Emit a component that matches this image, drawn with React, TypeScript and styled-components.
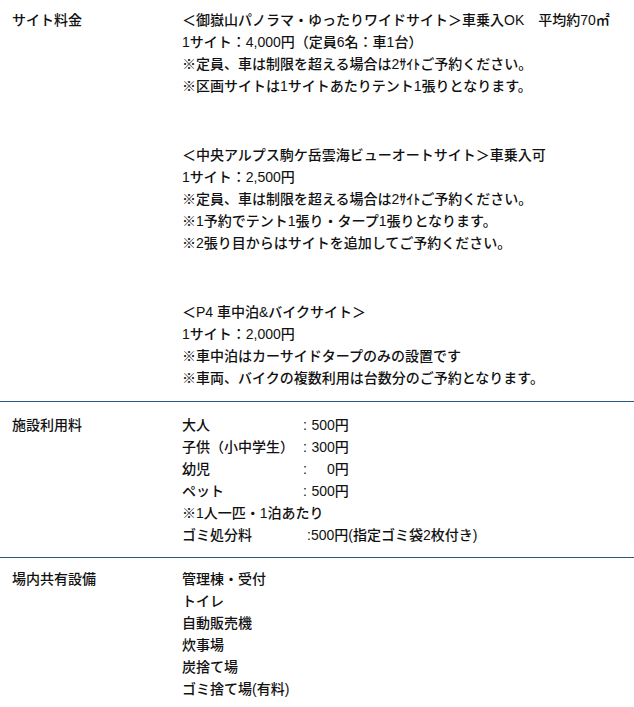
import styled, { createGlobalStyle } from 'styled-components';

const GlobalStyle = createGlobalStyle`
  body {
    margin: 0;
    background: #ffffff;
    color: #111111;
    font-family: "Liberation Sans", "Noto Sans CJK JP", sans-serif;
    font-size: 14px;
    font-weight: 500;
    line-height: 22px;
  }
`;

const Table = styled.div`
  width: 634px;
`;

const Row = styled.div<{ $divider?: boolean; $top: number; $bottom: number }>`
  display: grid;
  grid-template-columns: 170px 1fr;
  padding: ${(props) => props.$top}px 0 ${(props) => props.$bottom}px 12px;
  border-bottom: ${(props) => (props.$divider ? '1px solid #2d5b82' : 'none')};
`;

const Label = styled.div`
  white-space: nowrap;
`;

const Content = styled.div``;

const Group = styled.div`
  & + & {
    margin-top: 47px;
  }
`;

const Line = styled.div`
  white-space: nowrap;
`;

const FeeRow = styled.div`
  display: grid;
  grid-template-columns: 121px auto;
  white-space: nowrap;
`;

const FeeValue = styled.div<{ $shift?: number }>`
  padding-left: ${(props) => props.$shift || 0}px;
`;

const Amount = styled.span`
  display: inline-block;
  min-width: 38px;
  text-align: right;
`;

interface IFee {
  name: string;
  amount: string;
}

const fees: IFee[] = [
  { name: '大人', amount: '500円' },
  { name: '子供（小中学生）', amount: '300円' },
  { name: '幼児', amount: '0円' },
  { name: 'ペット', amount: '500円' },
];

const siteGroups: string[][] = [
  [
    '＜御嶽山パノラマ・ゆったりワイドサイト＞車乗入OK　平均約70㎡',
    '1サイト：4,000円（定員6名：車1台）',
    '※定員、車は制限を超える場合は2ｻｲﾄご予約ください。',
    '※区画サイトは1サイトあたりテント1張りとなります。',
  ],
  [
    '＜中央アルプス駒ケ岳雲海ビューオートサイト＞車乗入可',
    '1サイト：2,500円',
    '※定員、車は制限を超える場合は2ｻｲﾄご予約ください。',
    '※1予約でテント1張り・タープ1張りとなります。',
    '※2張り目からはサイトを追加してご予約ください。',
  ],
  [
    '＜P4 車中泊&バイクサイト＞',
    '1サイト：2,000円',
    '※車中泊はカーサイドタープのみの設置です',
    '※車両、バイクの複数利用は台数分のご予約となります。',
  ],
];

const facilities = ['管理棟・受付', 'トイレ', '自動販売機', '炊事場', '炭捨て場', 'ゴミ捨て場(有料)'];

const App = () => {
  return (
    <>
      <GlobalStyle />
      <Table>
        <Row $divider $top={9} $bottom={12}>
          <Label>サイト料金</Label>
          <Content>
            {siteGroups.map((group, i) => (
              <Group key={i}>
                {group.map((line) => (
                  <Line key={line}>{line}</Line>
                ))}
              </Group>
            ))}
          </Content>
        </Row>
        <Row $divider $top={12} $bottom={11}>
          <Label>施設利用料</Label>
          <Content>
            {fees.map((fee) => (
              <FeeRow key={fee.name}>
                <span>{fee.name}</span>
                <FeeValue>
                  : <Amount>{fee.amount}</Amount>
                </FeeValue>
              </FeeRow>
            ))}
            <Line>※1人一匹・1泊あたり</Line>
            <FeeRow>
              <span>ゴミ処分料</span>
              <FeeValue $shift={4}>:500円(指定ゴミ袋2枚付き)</FeeValue>
            </FeeRow>
          </Content>
        </Row>
        <Row $top={10} $bottom={8}>
          <Label>場内共有設備</Label>
          <Content>
            {facilities.map((item) => (
              <Line key={item}>{item}</Line>
            ))}
          </Content>
        </Row>
      </Table>
    </>
  );
};

export default App;
